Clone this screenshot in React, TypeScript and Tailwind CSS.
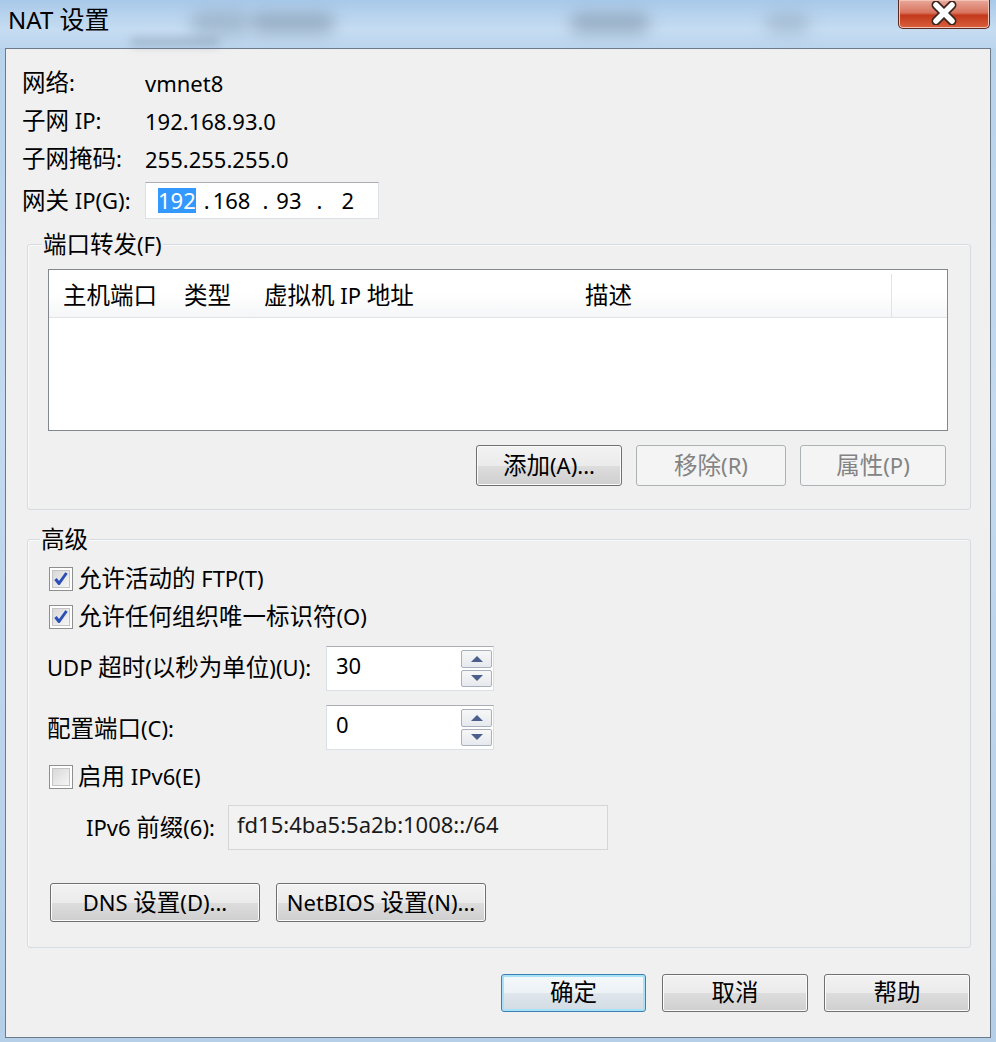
import React from "react";

const FONT = "font-['Noto_Sans','Noto_Sans_CJK_SC',sans-serif]";

const BTN =
  "flex items-center justify-center rounded-[3px] border text-[22px] leading-none";
const BTN_NORMAL =
  "border-[#707070] text-black bg-[linear-gradient(to_bottom,#f2f2f2_0%,#ebebeb_50%,#dddddd_50%,#cfcfcf_100%)] shadow-[inset_0_0_0_1px_#fbfbfb]";
const BTN_DISABLED = "border-[#adb2b5] bg-[#f4f4f4] text-[#838383]";
const BTN_DEFAULT =
  "border-[#3c7fb1] text-black bg-[linear-gradient(to_bottom,#f4f8fb_0%,#edf2f6_50%,#dfe6ec_50%,#d2dbe3_100%)] shadow-[inset_0_0_0_2px_#a8e2f8]";

// Chinese runs are set a little larger than Latin, as the dialog font does
const T = ({ children }: { children: string }) => {
  const parts = children.split(/([\u4e00-\u9fff]+)/);
  return (
    <span className="whitespace-pre">
      {parts.map((p, i) =>
        /[\u4e00-\u9fff]/.test(p) ? (
          <span key={i} className="text-[23.5px]">
            {p}
          </span>
        ) : (
          <React.Fragment key={i}>{p}</React.Fragment>
        )
      )}
    </span>
  );
};

const Check = ({ checked }: { checked: boolean }) => (
  <div className="flex h-[24px] w-[24px] items-center justify-center border border-[#8e8f8f] bg-white">
    <div className="flex h-[18px] w-[18px] items-center justify-center border border-[#c4c4c4] bg-[linear-gradient(135deg,#d8d8d8_0%,#f6f6f6_100%)]">
      {checked && (
        <svg width="16" height="16" viewBox="0 0 16 16">
          <path d="M2.5 8 L6 12.5 L13.5 2" fill="none" stroke="#2a4fb6" strokeWidth="3" strokeLinejoin="round" />
        </svg>
      )}
    </div>
  </div>
);

const SpinBtn = ({ up }: { up?: boolean }) => (
  <div className="flex flex-1 items-center justify-center rounded-[2px] border border-[#a7b0bc] bg-[linear-gradient(to_bottom,#f7f7f7_0%,#e6e9ee_100%)]">
    <svg width="12" height="6" viewBox="0 0 12 6">
      {up ? <path d="M0 6 L6 0 L12 6 Z" fill="#4a5f8c" /> : <path d="M0 0 L6 6 L12 0 Z" fill="#4a5f8c" />}
    </svg>
  </div>
);

const SpinInput = ({ value }: { value: string }) => (
  <div className="flex h-[45px] w-[168px] border border-[#dbdfe6] border-t-[#abadb3] bg-white">
    <div className="flex-1 pl-[9px] pt-[5px] text-[22px] leading-[26px]">{value}</div>
    <div className="flex w-[32px] flex-col gap-[2px] py-[3px] pr-[1px]">
      <SpinBtn up />
      <SpinBtn />
    </div>
  </div>
);

const GroupBox = ({ label, labelLeft, children }: { label: string; labelLeft: string; children: React.ReactNode }) => (
  <div className="relative ml-[21px] mr-[19px] rounded-[3px] border border-[#d5dbe0] shadow-[inset_1px_1px_0_#fafafa]">
    <span className={`absolute -top-[15px] ${labelLeft} bg-[#f0f0f0] px-[1px] text-[22px] leading-[28px]`}>
      <T>{label}</T>
    </span>
    {children}
  </div>
);

export default function App() {
  return (
    <div className={`${FONT} h-[1042px] w-[996px] overflow-hidden bg-[linear-gradient(to_bottom,#b7d2ec_0%,#c3daf0_40%,#b5cfe8_100%)] text-black`}>
      {/* title bar */}
      <div className="relative flex h-[48px] items-center bg-[linear-gradient(to_bottom,#a8c9ea_0%,#c5dcf1_60%,#bcd5ee_100%)] pb-[9px] pl-[8px]">
        <span className="absolute left-[190px] top-[10px] h-[26px] w-[60px] rounded-full bg-[#8fa6bc] opacity-60 blur-[8px]" />
        <span className="absolute left-[250px] top-[12px] h-[22px] w-[85px] rounded-full bg-[#7f95ab] opacity-60 blur-[8px]" />
        <span className="absolute left-[570px] top-[12px] h-[22px] w-[80px] rounded-full bg-[#7f95ab] opacity-60 blur-[8px]" />
        <span className="absolute left-[765px] top-[12px] h-[22px] w-[45px] rounded-full bg-[#8fa6bc] opacity-50 blur-[8px]" />
        <span className="absolute left-[130px] top-[38px] h-[8px] w-[90px] rounded-full bg-[#6f8296] opacity-40 blur-[5px]" />
        <span className="relative text-[24px] leading-none">
          NAT <span className="text-[25px]">设置</span>
        </span>
        <div className="absolute right-[6px] top-0 flex h-[29px] w-[92px] items-center justify-center rounded-b-[5px] border border-t-0 border-[#5a2a22] bg-[linear-gradient(to_bottom,#e9a99a_0%,#d8735f_45%,#c2391b_55%,#d9603c_100%)] pb-[2px] shadow-[inset_0_0_0_1px_#f2c4b8]">
          <svg width="30" height="24" viewBox="0 0 30 24">
            <path d="M7 4 L15 12 L23 4 M7 20 L15 12 L23 20" fill="none" stroke="#3a2520" strokeWidth="9" strokeLinecap="round" />
            <path d="M7 4 L15 12 L23 4 M7 20 L15 12 L23 20" fill="none" stroke="#ffffff" strokeWidth="5.5" strokeLinecap="round" />
          </svg>
        </div>
      </div>

      {/* client area */}
      <div className="ml-[5px] flex h-[990px] w-[986px] flex-col border border-[#6c7a89] bg-[#f0f0f0] text-[22px]">
        <div className="flex flex-col pl-[16px] pt-[15px]">
          <div className="flex h-[38px] items-center">
            <span className="w-[123px]"><T>网络:</T></span>
            <span>vmnet8</span>
          </div>
          <div className="flex h-[38px] items-center">
            <span className="w-[123px]"><T>子网 IP:</T></span>
            <span>192.168.93.0</span>
          </div>
          <div className="flex h-[38px] items-center">
            <span className="w-[123px]"><T>子网掩码:</T></span>
            <span>255.255.255.0</span>
          </div>
          <div className="mt-[4px] flex items-center">
            <span className="w-[123px]"><T>网关 IP(G):</T></span>
            <div className="flex h-[37px] w-[234px] items-center border border-[#dbdfe6] border-t-[#abadb3] bg-white pl-[12px]">
              <span className="bg-[#3399ff] leading-[25px] text-white">192</span>
              <span className="ml-[8px]">.</span>
              <span className="ml-[3px]">168</span>
              <span className="ml-[12px]">.</span>
              <span className="ml-[8px]">93</span>
              <span className="ml-[15px]">.</span>
              <span className="ml-[19px]">2</span>
            </div>
          </div>
        </div>

        {/* port forwarding */}
        <div className="mt-[25px]">
          <GroupBox label="端口转发(F)" labelLeft="left-[14px]">
            <div className="flex flex-col pb-[23px] pl-[20px] pr-[22px] pt-[24px]">
              <div className="flex h-[162px] flex-col border border-[#828790] bg-white">
                <div className="flex h-[48px] border-b border-[#e2e3e5] bg-[linear-gradient(to_bottom,#ffffff_0%,#ffffff_50%,#f5f6f7_100%)] pt-[4px] leading-none">
                  <div className="flex w-[120px] items-center pl-[14px]"><T>主机端口</T></div>
                  <div className="flex w-[80px] items-center pl-[15px]"><T>类型</T></div>
                  <div className="flex w-[321px] items-center pl-[15px]"><T>虚拟机 IP 地址</T></div>
                  <div className="flex w-[322px] items-center border-r border-[#e2e3e5] pl-[15px]"><T>描述</T></div>
                  <div className="flex-1" />
                </div>
                <div className="flex-1" />
              </div>
              <div className="mt-[14px] flex justify-end gap-[14px] pr-[2px]">
                <button className={`${BTN} ${BTN_NORMAL} h-[41px] w-[146px]`}><T>添加(A)...</T></button>
                <button className={`${BTN} ${BTN_DISABLED} h-[41px] w-[150px]`}><T>移除(R)</T></button>
                <button className={`${BTN} ${BTN_DISABLED} h-[41px] w-[146px]`}><T>属性(P)</T></button>
              </div>
            </div>
          </GroupBox>
        </div>

        {/* advanced */}
        <div className="mt-[29px]">
          <GroupBox label="高级" labelLeft="left-[12px]">
            <div className="flex flex-col pb-[25px] pt-[20px]">
              <div className="flex h-[38px] items-center gap-[5px] pl-[21px]">
                <Check checked />
                <T>允许活动的 FTP(T)</T>
              </div>
              <div className="flex h-[38px] items-center gap-[5px] pl-[21px]">
                <Check checked />
                <T>允许任何组织唯一标识符(O)</T>
              </div>
              <div className="mt-[10px] flex items-center pl-[19px]">
                <span className="w-[279px] pb-[2px]"><T>UDP 超时(以秒为单位)(U):</T></span>
                <SpinInput value="30" />
              </div>
              <div className="mt-[14px] flex items-center pl-[19px]">
                <span className="w-[279px] pt-[3px]"><T>配置端口(C):</T></span>
                <SpinInput value="0" />
              </div>
              <div className="mt-[8px] flex h-[38px] items-center gap-[5px] pl-[21px]">
                <Check checked={false} />
                <T>启用 IPv6(E)</T>
              </div>
              <div className="mt-[9px] flex items-center pl-[58px]">
                <span className="w-[142px]"><T>IPv6 前缀(6):</T></span>
                <div className="flex h-[45px] w-[380px] items-start border border-[#d6d6d6] bg-[#f2f2f2] pl-[8px] pt-[5px] leading-[26px] text-[#1a1a1a]">
                  fd15:4ba5:5a2b:1008::/64
                </div>
              </div>
              <div className="mt-[33px] flex gap-[16px] pl-[22px]">
                <button className={`${BTN} ${BTN_NORMAL} h-[39px] w-[210px]`}><T>DNS 设置(D)...</T></button>
                <button className={`${BTN} ${BTN_NORMAL} h-[39px] w-[210px]`}><T>NetBIOS 设置(N)...</T></button>
              </div>
            </div>
          </GroupBox>
        </div>

        {/* dialog buttons */}
        <div className="mt-[26px] flex justify-end gap-[16px] pr-[20px]">
          <button className={`${BTN} ${BTN_DEFAULT} h-[38px] w-[145px]`}><T>确定</T></button>
          <button className={`${BTN} ${BTN_NORMAL} h-[38px] w-[146px]`}><T>取消</T></button>
          <button className={`${BTN} ${BTN_NORMAL} h-[38px] w-[146px]`}><T>帮助</T></button>
        </div>
      </div>
    </div>
  );
}
